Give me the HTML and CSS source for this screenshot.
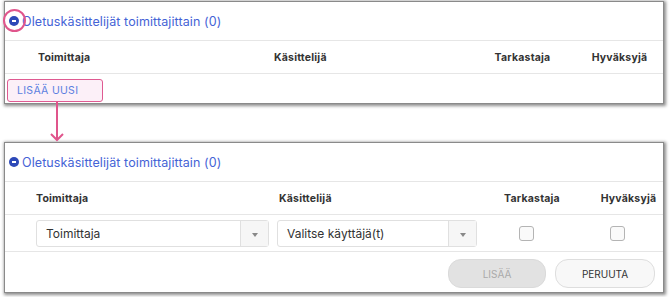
FILE: index.html
```html
<!doctype html>
<html lang="fi">
<head>
    <meta charset="UTF-8">
    <title>Oletuskäsittelijät toimittajittain</title>
    <link rel="stylesheet" href="styles.css">
</head>
<body>
<div class="figure">
    <!-- ennen: lista kiinni -->
    <div class="panel before">
        <div class="panel-title">
            <span class="toggle"></span>
            <span>Oletuskäsittelijät toimittajittain (0)</span>
        </div>
        <div class="grid head">
            <span>Toimittaja</span>
            <span>Käsittelijä</span>
            <span class="center col3">Tarkastaja</span>
            <span class="center col4">Hyväksyjä</span>
        </div>
        <div class="add-row">
            <span class="add-link">LISÄÄ UUSI</span>
        </div>
    </div>

    <div class="ring"></div>

    <div class="arrow">
        <svg width="16" height="40" viewBox="0 0 16 40">
            <path d="M8 0 V38" stroke="#e0558c" stroke-width="2" fill="none"/>
            <path d="M2 32 L8 38 L14 32" stroke="#e0558c" stroke-width="2" fill="none"/>
        </svg>
    </div>

    <!-- jälkeen: uusi rivi auki -->
    <div class="panel after">
        <div class="panel-title">
            <span class="toggle"></span>
            <span>Oletuskäsittelijät toimittajittain (0)</span>
        </div>
        <div class="grid head">
            <span>Toimittaja</span>
            <span class="pad">Käsittelijä</span>
            <span class="center col3">Tarkastaja</span>
            <span class="center col4">Hyväksyjä</span>
        </div>
        <div class="grid inputs">
            <div class="select">
                <span class="value">Toimittaja</span>
                <span class="caret"></span>
            </div>
            <div class="select">
                <span class="value">Valitse käyttäjä(t)</span>
                <span class="caret"></span>
            </div>
            <div class="center col3"><span class="check"></span></div>
            <div class="center col4"><span class="check"></span></div>
        </div>
        <div class="actions">
            <button class="btn disabled">LISÄÄ</button>
            <button class="btn">PERUUTA</button>
        </div>
    </div>
</div>
</body>
</html>
```

FILE: styles.css
```css
* {
    margin: 0;
    padding: 0;
    box-sizing: border-box;
}
body {
    background: #fff;
    font-family: Inter, "Noto Sans", sans-serif;
    color: #333;
}
.figure {
    position: relative;
    width: 670px;
    height: 297px;
    padding: 1px 0 0 4px;
}
.panel {
    width: 660px;
    background: #fff;
    border: 1px solid #8a8a8a;
    box-shadow: 1px 1px 3px 1px rgba(0, 0, 0, .45);
}
.panel-title {
    display: flex;
    align-items: center;
    gap: 3px;
    height: 39px;
    padding-left: 4px;
    border-bottom: 1px solid #e6e6e6;
    color: #4563d6;
    font-size: 12.5px;
    letter-spacing: .1px;
}
.toggle {
    position: relative;
    width: 10px;
    height: 10px;
    border-radius: 50%;
    background: #2d49b8;
}
.toggle::after {
    content: "";
    position: absolute;
    left: 3px;
    top: 4px;
    width: 4px;
    height: 2px;
    background: #fff;
}
.grid {
    display: grid;
    align-items: center;
    border-bottom: 1px solid #e6e6e6;
}
.head {
    height: 33px;
    font-size: 10.5px;
    font-weight: 700;
    letter-spacing: .2px;
    color: #333;
}
.before .head {
    grid-template-columns: 236px 196px 112px 1fr;
    padding-left: 33px;
    padding-right: 14px;
}
.before .head .col3 {
    padding-right: 7px;
}
.before .head .col4 {
    padding-left: 8px;
}
.after .head,
.after .inputs {
    grid-template-columns: 233px 208px 110px 1fr;
    padding-left: 31px;
}
.pad {
    padding-left: 10px;
}
.center {
    display: flex;
    justify-content: center;
}
.after .head .col4 {
    padding-left: 7px;
}
.inputs .col3 {
    padding-right: 12px;
}
.inputs .col4 {
    padding-right: 15px;
}
.add-row {
    height: 29px;
}
.add-link {
    position: absolute;
    left: 7px;
    top: 79px;
    width: 96px;
    height: 23px;
    padding: 4px 0 0 9px;
    border: 1.5px solid #df5a91;
    border-radius: 3px;
    background: #fcf0f8;
    color: #5b7fe0;
    font-size: 10.5px;
    letter-spacing: .3px;
}
.ring {
    position: absolute;
    left: 3px;
    top: 9px;
    width: 23px;
    height: 23px;
    border: 2px solid #e0558c;
    border-radius: 50%;
}
.arrow {
    height: 40px;
    padding-left: 45px;
}
.arrow svg {
    display: block;
    margin-top: -2px;
}
.inputs {
    height: 37px;
}
.select {
    display: flex;
    height: 27px;
    border: 1px solid #e0e0e0;
    border-radius: 3px;
    font-size: 12px;
    color: #333;
}
.select + .select {
    margin-left: 8px;
}
.value {
    flex: 1;
    display: flex;
    align-items: center;
    padding-left: 9px;
}
.caret {
    position: relative;
    width: 28px;
    border-left: 1px solid #e0e0e0;
    background: #f6f6f6;
}
.caret::after {
    content: "";
    position: absolute;
    left: 11px;
    top: 12px;
    border-left: 3px solid transparent;
    border-right: 3px solid transparent;
    border-top: 4px solid #888;
}
.check {
    width: 15px;
    height: 15px;
    border: 1px solid #b4b4b4;
    border-radius: 3px;
    background: #fafafa;
}
.actions {
    display: flex;
    justify-content: flex-end;
    gap: 9px;
    height: 40px;
    padding: 7px 8px 0 0;
}
.btn {
    width: 100px;
    height: 29px;
    border: 1px solid #dedede;
    border-radius: 13px;
    background: #f8f8f8;
    font-family: inherit;
    font-size: 10px;
    color: #333;
}
.btn.disabled {
    width: 98px;
    border-color: #dadada;
    background: #e2e2e2;
    color: #aaa;
}
```
